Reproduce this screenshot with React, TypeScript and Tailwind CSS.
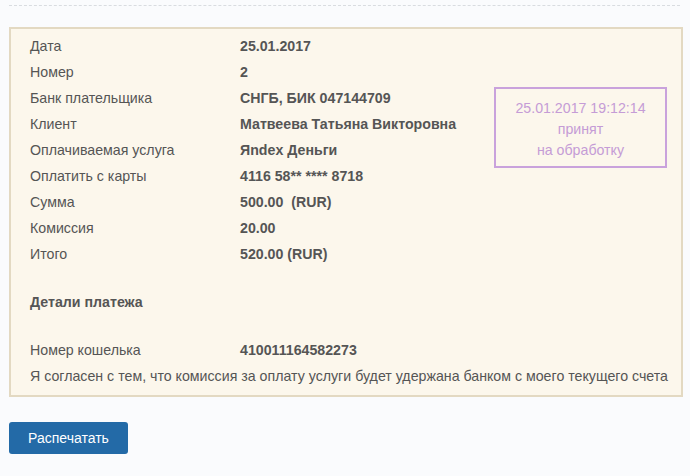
const rows: [string, string][] = [
  ['Дата', '25.01.2017'],
  ['Номер', '2'],
  ['Банк плательщика', 'СНГБ, БИК 047144709'],
  ['Клиент', 'Матвеева Татьяна Викторовна'],
  ['Оплачиваемая услуга', 'Яndex Деньги'],
  ['Оплатить с карты', '4116 58** **** 8718'],
  ['Сумма', '500.00\u00a0 (RUR)'],
  ['Комиссия', '20.00'],
  ['Итого', '520.00 (RUR)'],
];

function Row({ label, value }: { label: string; value: string }) {
  return (
    <div className="flex h-[26px] items-center">
      <div className="w-[210px] shrink-0">{label}</div>
      <div className="font-bold">{value}</div>
    </div>
  );
}

export default function App() {
  return (
    <div
      className="min-h-screen bg-[#fafbfd] text-[14.2px] text-[#555555]"
      style={{ fontFamily: '"Liberation Sans", Arial, sans-serif' }}
    >
      <div className="pt-[5px] pl-[9px]">
        <div className="w-[671px] border-t border-dashed border-[#d9dce0]" />
      </div>

      <div className="relative mt-[21px] ml-[9px] w-[674px] border-2 border-[#e3d9c2] bg-[#fcf7ec] pl-[19px] pt-[5px] pb-[5px]">
        {rows.map(([label, value]) => (
          <Row key={label} label={label} value={value} />
        ))}

        <div className="mt-[22px] flex h-[26px] items-center font-bold">Детали платежа</div>

        <div className="mt-[22px]">
          <Row label="Номер кошелька" value="410011164582273" />
        </div>
        <div className="flex h-[26px] items-center">
          Я согласен с тем, что комиссия за оплату услуги будет удержана банком с моего текущего счета
        </div>

        <div className="absolute left-[483px] top-[58px] flex h-[81px] w-[173px] flex-col items-center border-2 border-[#c9a2dc] pt-[9px] text-[14.2px] leading-[21px] text-[#c59cd6]">
          <div>25.01.2017 19:12:14</div>
          <div>принят</div>
          <div>на обработку</div>
        </div>
      </div>

      <div className="mt-[25px] ml-[9px]">
        <button
          type="button"
          className="h-[32px] w-[119px] rounded-[3px] bg-[#236aa7] text-[14px] text-white"
        >
          Распечатать
        </button>
      </div>
    </div>
  );
}
